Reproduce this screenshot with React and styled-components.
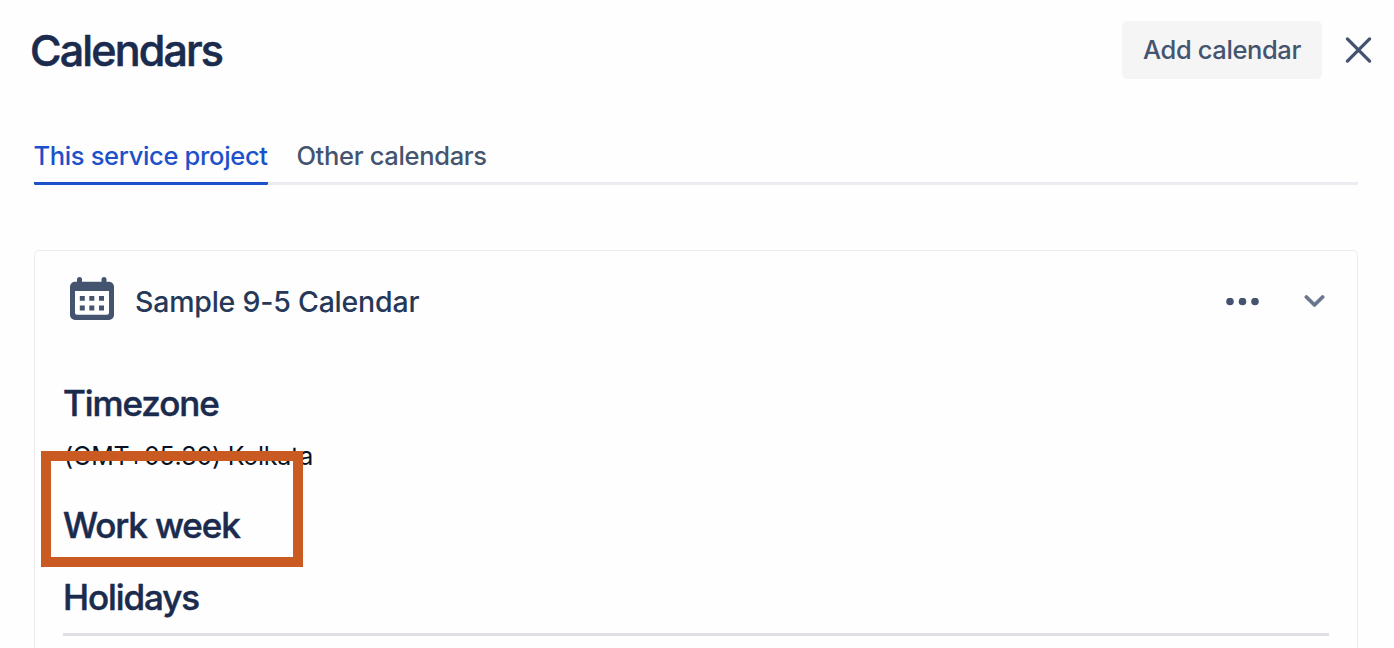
import React from 'react';
import styled, { createGlobalStyle } from 'styled-components';

const GlobalStyle = createGlobalStyle`
    * {
        box-sizing: border-box;
    }

    body {
        margin: 0;
        background: #fefefe;
        color: #1b2b4e;
        font-family: Inter, "Liberation Sans", sans-serif;
    }

    h1, h2, h3, p {
        margin: 0;
    }

    button {
        padding: 0;
        border: 0;
        background: none;
        font-family: inherit;
        cursor: pointer;
    }
`;

const Page = styled.main`
    height: 648px;
    overflow: hidden;
    padding: 21px 36px 0 34px;
`;

const Header = styled.header`
    display: flex;
    align-items: center;
    height: 58px;
    margin: 0 -14px 0 -4px;
`;

const Title = styled.h1`
    flex: 1;
    font-size: 43px;
    font-weight: 500;
    line-height: 58px;
    letter-spacing: -1.85px;
    white-space: nowrap;
    -webkit-text-stroke: 0.6px currentColor;
`;

const AddButton = styled.button`
    width: 200px;
    height: 58px;
    padding-bottom: 2px;
    border-radius: 5px;
    background: #f5f5f5;
    color: #44546f;
    font-size: 25.5px;
    font-weight: 500;
    letter-spacing: -0.38px;
    white-space: nowrap;
`;

const IconButton = styled.button`
    display: flex;
    color: ${props => props.$color || '#44546f'};
    margin-left: ${props => props.$gap}px;
`;

const Tabs = styled.nav`
    display: flex;
    gap: 29px;
    height: 48px;
    margin-top: 58px;
    border-radius: 1.5px;
    box-shadow: inset 0 -3px #ebecf0;
`;

const Tab = styled.button`
    width: ${props => props.$width}px;
    height: 48px;
    padding-bottom: 7px;
    border-bottom: 3px solid transparent;
    color: #44546f;
    font-size: 25.5px;
    font-weight: 500;
    line-height: 36px;
    letter-spacing: -0.33px;
    text-align: left;
    text-indent: -0.6px;
    white-space: nowrap;

    &.active {
        border-radius: 1.5px;
        border-bottom-color: #1d51c9;
        color: #1d51c9;
    }
`;

const Card = styled.section`
    height: 440px;
    margin-top: 65px;
    padding: 0 28px;
    border: 1px solid #ebebed;
    border-radius: 5px;
`;

const CardHeader = styled.div`
    display: flex;
    align-items: center;
    height: 102px;
    margin-bottom: 28px;
    padding: 0 3px 0 7px;
`;

const CalendarName = styled.h3`
    flex: 1;
    margin-left: 21px;
    color: #253858;
    font-size: 28.5px;
    font-weight: 500;
    line-height: 36px;
    letter-spacing: -0.22px;
    white-space: nowrap;
`;

const Section = styled.div`
    position: relative;
    height: ${props => props.$height}px;
`;

const SectionTitle = styled.h2`
    width: max-content;
    font-size: 35px;
    font-weight: 500;
    line-height: 44px;
    letter-spacing: -1.1px;
    white-space: nowrap;
    -webkit-text-stroke: 0.5px currentColor;
`;

const Timezone = styled.p`
    width: max-content;
    margin-top: 15px;
    padding-left: 1px;
    color: #091224;
    font-size: 25px;
    line-height: 32px;
    letter-spacing: -0.25px;
    white-space: nowrap;
`;

const Highlight = styled.div`
    position: absolute;
    top: -52px;
    left: -22px;
    width: 262px;
    height: 116px;
    border: 10px solid #c85a22;
`;

const Divider = styled.hr`
    height: 3px;
    margin: 0;
    border: 0;
    background: #dfdfe4;
`;

const CloseIcon = () => (
    <svg width="27" height="28" viewBox="0 0 27 28" fill="none" stroke="currentColor" strokeWidth="3.3" strokeLinecap="round">
        <path d="M2.4 2.9 24.6 25.1M24.6 2.9 2.4 25.1" />
    </svg>
);

const CalendarIcon = () => (
    <svg width="44" height="50" viewBox="0 0 44 50" fill="#44546f">
        <rect x="7" y="0" width="5" height="9" rx="2.5" />
        <rect x="31.5" y="0" width="5" height="9" rx="2.5" />
        <path fillRule="evenodd" d="M5 4.7h34a5 5 0 0 1 5 5v28.2a5 5 0 0 1-5 5H5a5 5 0 0 1-5-5V9.7a5 5 0 0 1 5-5ZM5 14v21.8a2 2 0 0 0 2 2h30a2 2 0 0 0 2-2V14Z" />
        <path d="M9.8 19h5v4.8h-5ZM19.3 19h5v4.8h-5ZM29 19h5v4.8h-5ZM9.8 28.6h5v4.8h-5ZM19.3 28.6h5v4.8h-5ZM29 28.6h5v4.8h-5Z" />
    </svg>
);

const MoreIcon = () => (
    <svg width="34" height="8" viewBox="0 0 34 8" fill="currentColor">
        <circle cx="4" cy="3.5" r="3.8" />
        <circle cx="16.5" cy="3.5" r="3.8" />
        <circle cx="29" cy="3.5" r="3.8" />
    </svg>
);

const ChevronIcon = () => (
    <svg width="22" height="16" viewBox="0 0 22 16" fill="none" stroke="currentColor" strokeWidth="3.8" strokeLinecap="round" strokeLinejoin="round">
        <path d="m2.4 3 8.1 8 8.1-8" />
    </svg>
);

const tabs = [
    { label: 'This service project', width: 234 },
    { label: 'Other calendars', width: 192 },
];

class App extends React.Component {

    state = {
        activeTab: 0
    }

    selectTab = (activeTab) => {
        this.setState({ activeTab });
    }

    render () {
        const { activeTab } = this.state;

        return (
        <Page>
            <GlobalStyle />
            <Header>
                <Title>Calendars</Title>
                <AddButton>Add calendar</AddButton>
                <IconButton $gap={23} aria-label="Close"><CloseIcon /></IconButton>
            </Header>
            <Tabs>
                {tabs.map((tab, index) => (
                    <Tab
                        key={tab.label}
                        $width={tab.width}
                        className={index === activeTab ? 'active' : ''}
                        onClick={() => this.selectTab(index)}
                    >
                        {tab.label}
                    </Tab>
                ))}
            </Tabs>
            <Card>
                <CardHeader>
                    <CalendarIcon />
                    <CalendarName>Sample 9-5 Calendar</CalendarName>
                    <IconButton $gap={0} aria-label="More actions"><MoreIcon /></IconButton>
                    <IconButton $gap={44} $color="#6b778c" aria-label="Collapse"><ChevronIcon /></IconButton>
                </CardHeader>
                <Section $height={122}>
                    <SectionTitle>Timezone</SectionTitle>
                    <Timezone>(GMT+05:30) Kolkata</Timezone>
                </Section>
                <Section $height={72}>
                    <SectionTitle>Work week</SectionTitle>
                    <Highlight />
                </Section>
                <Section $height={58}>
                    <SectionTitle>Holidays</SectionTitle>
                </Section>
                <Divider />
            </Card>
        </Page>
        )
    }
}

export default App;
